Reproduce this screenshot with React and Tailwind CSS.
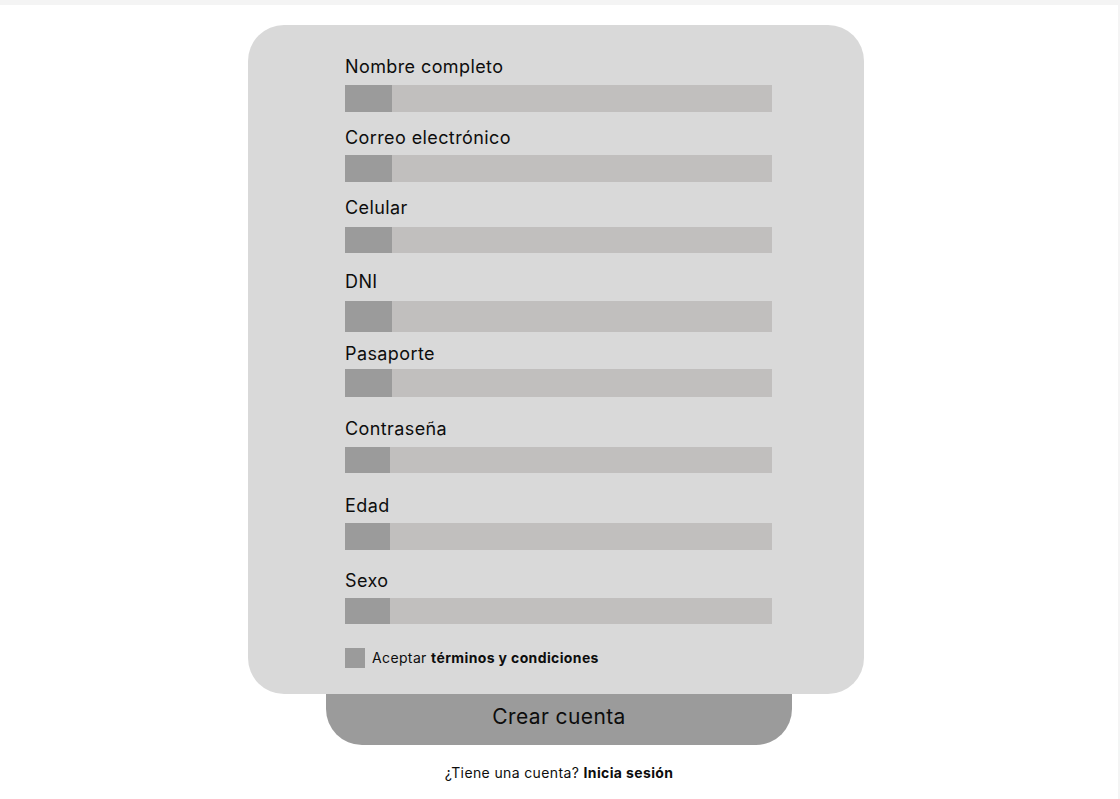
import React from "react";

function Field({ label, mt, gap, h, dark }) {
  return (
    <div className={`flex flex-col ${mt}`}>
      <div className="h-[22px] text-[18px] leading-[22px] tracking-[0.4px] text-[#0d0d0d]">{label}</div>
      <div className={`flex w-[427px] bg-[#c1bfbe] ${gap} ${h}`}>
        <div className={`h-full bg-[#9b9b9b] ${dark}`} />
      </div>
    </div>
  );
}

export default function App() {
  return (
    <div
      className="min-h-screen bg-white flex flex-col"
      style={{ fontFamily: "Inter, 'Noto Sans', sans-serif" }}
    >
      <div className="h-[5px] w-full bg-[#f4f4f4]" />
      <div className="flex flex-1">
        <main className="flex-1 flex flex-col items-center pt-[20px]">
          <div className="w-[616px] mr-[6px] rounded-[36px] bg-[#d9d9d9] pl-[97px] pt-[31px] pb-[26px] flex flex-col">
            <Field label="Nombre completo" mt="mt-0" gap="mt-[7px]" h="h-[27px]" dark="w-[47px]" />
            <Field label="Correo electrónico" mt="mt-[15px]" gap="mt-[6px]" h="h-[27px]" dark="w-[47px]" />
            <Field label="Celular" mt="mt-[15px]" gap="mt-[8px]" h="h-[26px]" dark="w-[47px]" />
            <Field label="DNI" mt="mt-[18px]" gap="mt-[8px]" h="h-[31px]" dark="w-[47px]" />
            <Field label="Pasaporte" mt="mt-[11px]" gap="mt-[4px]" h="h-[28px]" dark="w-[47px]" />
            <Field label="Contraseña" mt="mt-[21px]" gap="mt-[7px]" h="h-[26px]" dark="w-[45px]" />
            <Field label="Edad" mt="mt-[22px]" gap="mt-[6px]" h="h-[27px]" dark="w-[45px]" />
            <Field label="Sexo" mt="mt-[20px]" gap="mt-[6px]" h="h-[26px]" dark="w-[45px]" />
            <div className="mt-[24px] flex items-center h-[20px]">
              <div className="w-[20px] h-[20px] bg-[#9b9b9b]" />
              <span className="ml-[7px] text-[14px] leading-[20px] tracking-[0.37px] text-[#0d0d0d]">
                Aceptar <span className="font-bold">términos y condiciones</span>
              </span>
            </div>
          </div>
          <button className="w-[466px] h-[51px] rounded-b-[36px] bg-[#9b9b9b] pt-[10px] flex justify-center items-start text-[21px] leading-[25px] tracking-[0.4px] text-[#0d0d0d]">
            Crear cuenta
          </button>
          <p className="mt-[18px] text-[14px] leading-[20px] tracking-[0.37px] text-[#0d0d0d]">
            ¿Tiene una cuenta? <span className="font-bold">Inicia sesión</span>
          </p>
        </main>
        <div className="w-[2px] bg-[#f4f4f4]" />
      </div>
    </div>
  );
}
